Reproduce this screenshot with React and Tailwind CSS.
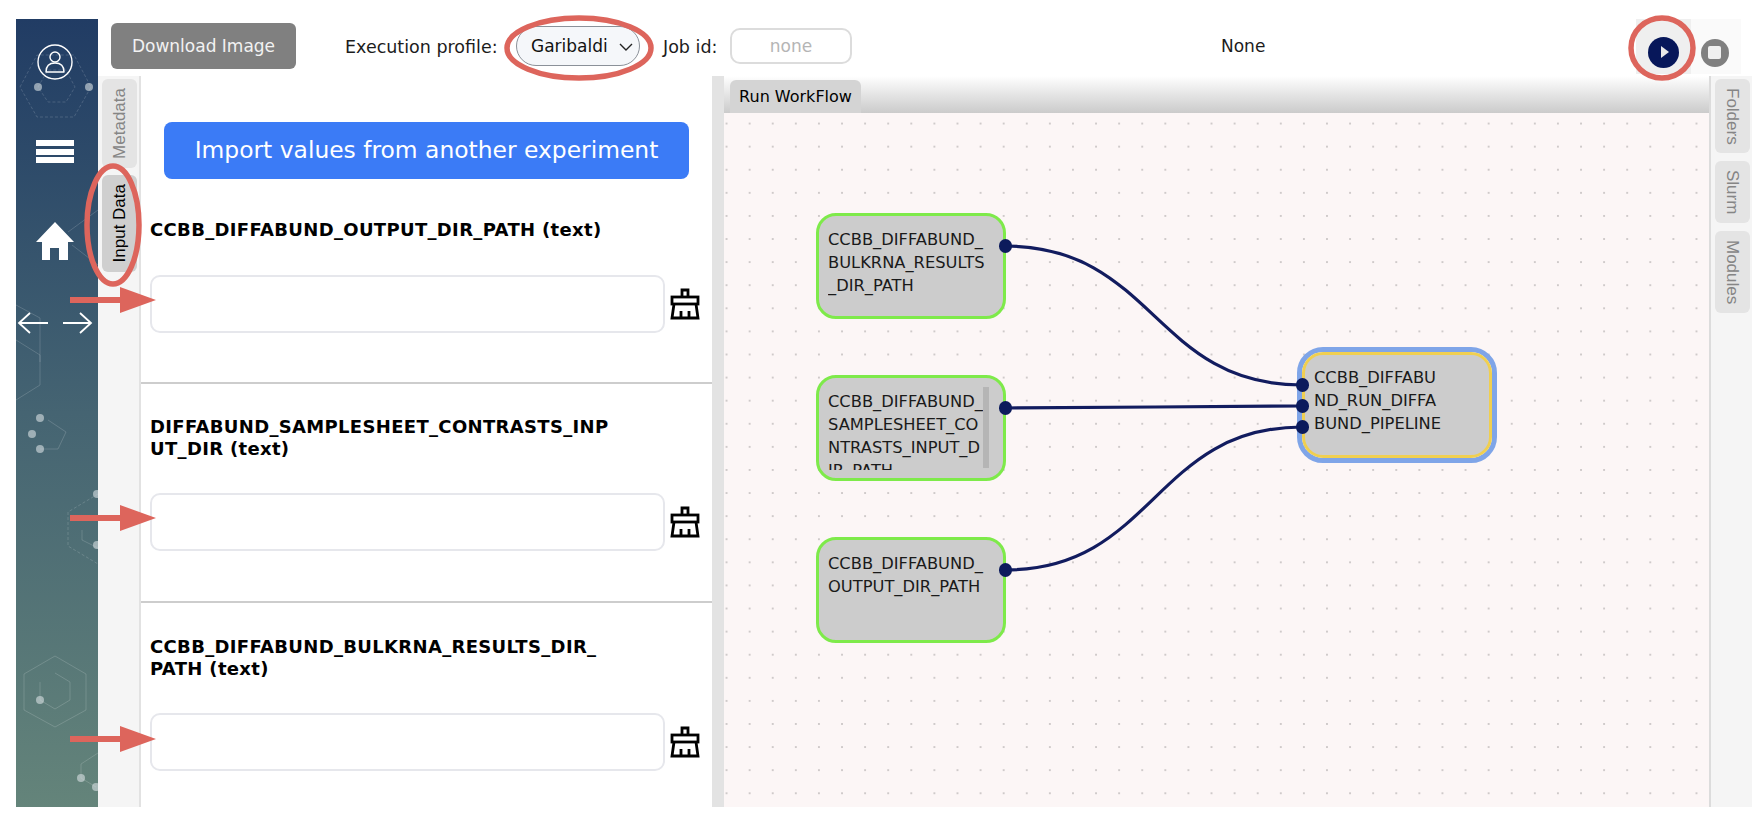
import React from 'react';

const verdana = "font-['DejaVu_Sans',sans-serif]";
const arial = "font-['Liberation_Sans',sans-serif]";

function SidebarArt() {
  return (
    <svg className="absolute inset-0" width="82" height="788" viewBox="16 19 82 788" fill="none">
      <g stroke="#ffffff" strokeOpacity="0.16" strokeWidth="1">
        <path d="M20 87 L37 55 L74 55 L91 87 L74 117 L37 117 Z" strokeDasharray="3 2" />
        <path d="M38 87 L48 70 L66 70 L75 87 L66 102 L48 102 Z" strokeDasharray="3 2" />
        <path d="M68 232 L98 210 M72 245 L98 265" />
        <path d="M16 340 L40 355 L40 385 L16 400" />
        <path d="M16 305 L40 318 L40 362" />
        <path d="M48 420 L66 432 L58 449 L40 449" />
        <path d="M98 494 L68 512 L68 546 L98 564" strokeDasharray="3 2" />
        <path d="M82 530 L82 540 L98 548" />
        <path d="M55 656 L86 674 L86 710 L55 727 L24 710 L24 674 Z" />
        <path d="M55 673 L70 682 L70 700 L55 709 L40 700 L40 682" />
        <path d="M98 753 L81 764 L81 778 L96 787" />
      </g>
      <g fill="#d5dde0" fillOpacity="0.62">
        <circle cx="38" cy="87" r="4" />
        <circle cx="89" cy="87" r="4" />
        <circle cx="40" cy="418" r="4" />
        <circle cx="32" cy="434" r="4" />
        <circle cx="40" cy="449" r="4" />
        <circle cx="97" cy="494" r="4" />
        <circle cx="97" cy="545" r="4" />
        <circle cx="40" cy="700" r="4" />
        <circle cx="81" cy="778" r="4" />
        <circle cx="96" cy="787" r="4" />
      </g>
      <g stroke="#ffffff" strokeWidth="1.4">
        <circle cx="55" cy="62" r="17" />
        <circle cx="55" cy="57" r="5" />
        <path d="M46 72 C46 65 50 63 55 63 C60 63 64 65 64 72 Z" strokeLinejoin="round" />
      </g>
      <g fill="#ffffff">
        <rect x="36" y="140" width="38" height="6" />
        <rect x="36" y="149" width="38" height="6" />
        <rect x="36" y="157" width="38" height="6" />
        <path d="M55 222 L74 242 L68 242 L68 260 L59 260 L59 248 L50 248 L50 260 L42 260 L42 242 L36 242 Z" strokeLinejoin="round" />
      </g>
      <g stroke="#ffffff" strokeWidth="1.8">
        <path d="M48 323 L19 323 M30 313 L19 323 L30 333" />
        <path d="M63 323 L91 323 M80 313 L91 323 L80 333" />
      </g>
    </svg>
  );
}

function BrushIcon() {
  return (
    <svg width="30" height="32" viewBox="0 0 30 32" fill="none" stroke="#000" strokeWidth="2.8" className="shrink-0">
      <path d="M12 9 L12 2 L18 2 L18 9" />
      <rect x="2" y="9" width="26" height="7" />
      <path d="M4 16 L2 30 L28 30 L26 16" />
      <path d="M11 30 L11 23 M19 30 L19 23" />
    </svg>
  );
}

function VerticalTab({ label, active, flip, className }) {
  return (
    <div className={`flex items-center justify-center rounded-md text-[17px] ${arial} ${active ? 'bg-[#cfcfcf] text-black' : 'bg-[#e4e4e4] text-[#858585]'} ${className}`}>
      <span className={`[writing-mode:vertical-rl] ${flip ? 'rotate-180' : ''}`}>{label}</span>
    </div>
  );
}

function Field({ lines, labelClass, boxClass, border }) {
  return (
    <div className={`pl-[9px] pr-[12px] ${border ? 'border-b-2 border-[#cdcdcd]' : ''} ${boxClass}`}>
      <div className={`text-[18px] tracking-[0.33px] leading-[22px] font-bold text-black ${verdana} ${labelClass}`}>
        {lines.map((l) => <div key={l} className="whitespace-nowrap">{l}</div>)}
      </div>
      <div className="flex items-center gap-[5px]">
        <div className="w-[516px] h-[58px] rounded-[10px] border-2 border-[#e6e7ec] bg-white" />
        <BrushIcon />
      </div>
    </div>
  );
}

function Node({ lines, className, scroll }) {
  return (
    <div className={`absolute w-[190px] h-[106px] rounded-[20px] border-[3.5px] border-[#7eea4a] bg-[#cccccc] pl-[9px] text-[16.3px] leading-[23px] text-[#1a1a1a] ${verdana} ${className}`}>
      <div className="h-[92px] pt-[12px] overflow-hidden">
        {lines.map((l) => <div key={l} className="whitespace-nowrap">{l}</div>)}
      </div>
      {scroll && <div className="absolute right-[14px] top-[9px] w-[6px] h-[81px] bg-[#b5b5b5]" />}
    </div>
  );
}

function Port({ className }) {
  return <div className={`absolute w-[13px] h-[14px] rounded-full bg-[#0c1b5c] ${className}`} />;
}

function Marks() {
  return (
    <svg className="absolute inset-0 pointer-events-none" width="1752" height="816" fill="none">
      <g stroke="#dd655c" strokeWidth="5.5">
        <ellipse cx="113" cy="225" rx="26" ry="59" />
        <ellipse cx="579" cy="48" rx="72" ry="30" />
        <ellipse cx="1662" cy="48" rx="31" ry="30" />
      </g>
      <g fill="#dd655c">
        <path d="M70 297 L120 297 L120 287 L156 300 L120 313 L120 303 L70 303 Z" />
        <path d="M70 515 L120 515 L120 505 L156 518 L120 531 L120 521 L70 521 Z" />
        <path d="M70 736 L120 736 L120 726 L156 739 L120 752 L120 742 L70 742 Z" />
      </g>
    </svg>
  );
}

export default function App() {
  return (
    <div className={`relative w-[1752px] h-[816px] bg-white overflow-hidden flex items-start ${verdana}`}>
      <aside className="relative ml-[16px] mt-[19px] w-[82px] h-[788px] shrink-0 bg-gradient-to-b from-[#213c64] via-[#456472] to-[#64847a] overflow-hidden">
        <SidebarArt />
      </aside>

      <div className="w-[1654px] h-[807px] flex flex-col">
        {/* top bar */}
        <div className="h-[76px] shrink-0 pt-[16px] flex items-center text-[17px] text-[#1c1c1c]">
          <button className="ml-[13px] w-[185px] h-[46px] pt-[2px] rounded-md bg-[#808080] text-[#f2f2f2] text-[17px]">Download Image</button>
          <span className="ml-[49px] w-[171px] mt-[2px] whitespace-nowrap text-[17.5px]">Execution profile:</span>
          <div className="w-[124px] h-[40px] rounded-full border border-[#8b9199] bg-[#f5f7fa] flex items-center pl-[14px] pr-[4px] pt-[1px] justify-between text-[#111]">
            <span>Garibaldi</span>
            <svg width="18" height="18" viewBox="0 0 18 18" fill="none" stroke="#222" strokeWidth="1.4"><path d="M3 6 L9 12 L15 6" /></svg>
          </div>
          <span className="ml-[23px] w-[67px] mt-[2px] whitespace-nowrap text-[17.5px]">Job id:</span>
          <div className="w-[122px] h-[36px] pt-[2px] rounded-[10px] border-2 border-[#dcdcdc] flex items-center justify-center text-[#b5b5b5]">none</div>
          <span className="ml-[369px] w-[415px] mt-[2px] whitespace-nowrap">None</span>
          <div className="flex h-[55px]">
            <div className="w-[55px] bg-[#efefef] flex items-end justify-center pb-[6px]">
              <div className="w-[31px] h-[31px] rounded-full bg-[#07175a] flex items-center justify-center">
                <div className="ml-[2px] w-0 h-0 border-y-[6px] border-y-transparent border-l-[8px] border-l-[#e8e8e8]" />
              </div>
            </div>
            <div className="w-[50px] bg-[#fafafa] flex items-end justify-center pb-[7px] pr-[3px]">
              <div className="w-[28px] h-[28px] rounded-full bg-[#808080] flex items-center justify-center">
                <div className="w-[13px] h-[13px] rounded-[2px] bg-[#f0f0f0]" />
              </div>
            </div>
          </div>
        </div>

        {/* body */}
        <div className="flex-1 flex min-h-0">
          <div className="w-[43px] shrink-0 bg-[#f5f5f5] border-r-2 border-[#e2e2e2] pt-[3px] pl-[4px] flex flex-col gap-[7px]">
            <VerticalTab label="Metadata" flip className="w-[35px] h-[89px]" />
            <VerticalTab label="Input Data" flip active className="w-[35px] h-[97px]" />
          </div>

          <div className="w-[571px] shrink-0 bg-white overflow-hidden">
            <div className="ml-[23px] mt-[46px] w-[525px] h-[57px] rounded-lg bg-[#3b7bf6] flex items-center justify-center text-white text-[23.4px]">
              Import values from another experiment
            </div>
            <Field lines={['CCBB_DIFFABUND_OUTPUT_DIR_PATH (text)']} labelClass="pt-[40px] mb-[34px]" boxClass="h-[205px]" border />
            <Field lines={['DIFFABUND_SAMPLESHEET_CONTRASTS_INP', 'UT_DIR (text)']} labelClass="pt-[32px] mb-[33px]" boxClass="h-[219px]" border />
            <Field lines={['CCBB_DIFFABUND_BULKRNA_RESULTS_DIR_', 'PATH (text)']} labelClass="pt-[33px] mb-[33px]" />
          </div>

          <div className="w-[12px] shrink-0 bg-[#e3e3e3]" />

          <div className="w-[985px] shrink-0 flex flex-col">
            <div className="h-[37px] shrink-0 bg-gradient-to-b from-white to-[#cbcbcb] flex items-end pl-[6px]">
              <div className="w-[131px] h-[33px] rounded-t-md bg-[#d4d4d4] flex items-center justify-center text-[16px] text-black">Run WorkFlow</div>
            </div>
            <div className="relative flex-1 bg-[#fcf6f6] bg-[radial-gradient(circle,#cfcaca_0.8px,transparent_1.1px)] bg-[size:23.1px_23.1px] bg-[position:-9px_-1px] overflow-hidden">
              <svg className="absolute inset-0" width="985" height="694" fill="none" stroke="#121c5f" strokeWidth="3.2">
                <path d="M281 133 C 430 133, 430 272, 578 272" />
                <path d="M281 295 C 400 295, 460 293, 578 293" />
                <path d="M281 457 C 430 457, 430 314, 578 314" />
              </svg>
              <Node className="left-[92px] top-[100px]" lines={['CCBB_DIFFABUND_', 'BULKRNA_RESULTS', '_DIR_PATH']} />
              <Node className="left-[92px] top-[262px]" lines={['CCBB_DIFFABUND_', 'SAMPLESHEET_CO', 'NTRASTS_INPUT_D', 'IR_PATH']} scroll />
              <Node className="left-[92px] top-[424px]" lines={['CCBB_DIFFABUND_', 'OUTPUT_DIR_PATH']} />
              <div className="absolute left-[573px] top-[234px] w-[200px] h-[116px] rounded-[26px] border-[5px] border-[#7fa5e8]">
                <div className="h-full rounded-[21px] border-[3px] border-[#f0cf50] bg-[#cccccc] pl-[9px] pt-[11px] text-[16.3px] leading-[23px] text-[#1a1a1a]">
                  <div>CCBB_DIFFABU</div>
                  <div>ND_RUN_DIFFA</div>
                  <div>BUND_PIPELINE</div>
                </div>
              </div>
              <Port className="left-[275px] top-[126px]" />
              <Port className="left-[275px] top-[288px]" />
              <Port className="left-[275px] top-[450px]" />
              <Port className="left-[572px] top-[265px]" />
              <Port className="left-[572px] top-[286px]" />
              <Port className="left-[572px] top-[307px]" />
            </div>
          </div>

          <div className="w-[43px] shrink-0 bg-[#f5f5f5] border-l-2 border-[#dcdcdc] pt-[3px] pl-[4px] flex flex-col gap-[8px]">
            <VerticalTab label="Folders" className="w-[35px] h-[74px]" />
            <VerticalTab label="Slurm" className="w-[35px] h-[62px]" />
            <VerticalTab label="Modules" className="w-[35px] h-[82px]" />
          </div>
        </div>
      </div>

      <Marks />
    </div>
  );
}
